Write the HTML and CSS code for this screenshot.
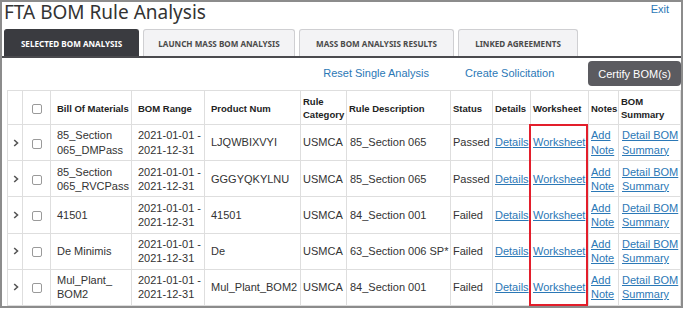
FILE: index.html
```html
<!DOCTYPE html>
<html>
<head>
    <title>FTA BOM Rule Analysis</title>
    <link rel="stylesheet" href="styles.css">
</head>
<body>
<div class="frame">
    <div class="page-header">
        <h1>FTA BOM Rule Analysis</h1>
        <a href="#" class="exit">Exit</a>
    </div>

    <div class="tabs">
        <div class="tab tab-selected active">SELECTED BOM ANALYSIS</div>
        <div class="tab tab-launch">LAUNCH MASS BOM ANALYSIS</div>
        <div class="tab tab-results">MASS BOM ANALYSIS RESULTS</div>
        <div class="tab tab-linked">LINKED AGREEMENTS</div>
    </div>

    <div class="toolbar">
        <a href="#" class="tool-link">Reset Single Analysis</a>
        <a href="#" class="tool-link">Create Solicitation</a>
        <button class="certify">Certify BOM(s)</button>
    </div>

    <div class="table-wrap">
        <table class="bom-table">
            <colgroup>
                <col style="width:15px">
                <col style="width:28px">
                <col style="width:81px">
                <col style="width:73px">
                <col style="width:96px">
                <col style="width:46px">
                <col style="width:104px">
                <col style="width:42px">
                <col style="width:38px">
                <col style="width:58px">
                <col style="width:30px">
                <col style="width:62px">
            </colgroup>
            <thead>
                <tr>
                    <th></th>
                    <th class="check-cell"><span class="checkbox"></span></th>
                    <th class="wide">Bill Of Materials</th>
                    <th class="wide">BOM Range</th>
                    <th class="wide">Product Num</th>
                    <th>Rule Category</th>
                    <th>Rule Description</th>
                    <th>Status</th>
                    <th>Details</th>
                    <th>Worksheet</th>
                    <th>Notes</th>
                    <th>BOM Summary</th>
                </tr>
            </thead>
            <tbody>
                <tr>
                    <td class="expand"><svg width="6" height="8" viewBox="0 0 6 8"><polyline points="1.2,1 4.5,4 1.2,7" fill="none" stroke="#555" stroke-width="1.6"/></svg></td>
                    <td class="check-cell"><span class="checkbox"></span></td>
                    <td class="wide">85_Section 065_DMPass</td>
                    <td class="wide">2021-01-01 - 2021-12-31</td>
                    <td class="wide">LJQWBIXVYI</td>
                    <td>USMCA</td>
                    <td class="desc">85_Section 065</td>
                    <td>Passed</td>
                    <td><a href="#">Details</a></td>
                    <td><a href="#">Worksheet</a></td>
                    <td><a href="#">Add Note</a></td>
                    <td class="summary"><a href="#">Detail BOM Summary</a></td>
                </tr>
                <tr>
                    <td class="expand"><svg width="6" height="8" viewBox="0 0 6 8"><polyline points="1.2,1 4.5,4 1.2,7" fill="none" stroke="#555" stroke-width="1.6"/></svg></td>
                    <td class="check-cell"><span class="checkbox"></span></td>
                    <td class="wide">85_Section 065_RVCPass</td>
                    <td class="wide">2021-01-01 - 2021-12-31</td>
                    <td class="wide">GGGYQKYLNU</td>
                    <td>USMCA</td>
                    <td class="desc">85_Section 065</td>
                    <td>Passed</td>
                    <td><a href="#">Details</a></td>
                    <td><a href="#">Worksheet</a></td>
                    <td><a href="#">Add Note</a></td>
                    <td class="summary"><a href="#">Detail BOM Summary</a></td>
                </tr>
                <tr>
                    <td class="expand"><svg width="6" height="8" viewBox="0 0 6 8"><polyline points="1.2,1 4.5,4 1.2,7" fill="none" stroke="#555" stroke-width="1.6"/></svg></td>
                    <td class="check-cell"><span class="checkbox"></span></td>
                    <td class="wide">41501</td>
                    <td class="wide">2021-01-01 - 2021-12-31</td>
                    <td class="wide">41501</td>
                    <td>USMCA</td>
                    <td class="desc">84_Section 001</td>
                    <td>Failed</td>
                    <td><a href="#">Details</a></td>
                    <td><a href="#">Worksheet</a></td>
                    <td><a href="#">Add Note</a></td>
                    <td class="summary"><a href="#">Detail BOM Summary</a></td>
                </tr>
                <tr>
                    <td class="expand"><svg width="6" height="8" viewBox="0 0 6 8"><polyline points="1.2,1 4.5,4 1.2,7" fill="none" stroke="#555" stroke-width="1.6"/></svg></td>
                    <td class="check-cell"><span class="checkbox"></span></td>
                    <td class="wide">De Minimis</td>
                    <td class="wide">2021-01-01 - 2021-12-31</td>
                    <td class="wide">De</td>
                    <td>USMCA</td>
                    <td class="desc">63_Section 006 SP*</td>
                    <td>Failed</td>
                    <td><a href="#">Details</a></td>
                    <td><a href="#">Worksheet</a></td>
                    <td><a href="#">Add Note</a></td>
                    <td class="summary"><a href="#">Detail BOM Summary</a></td>
                </tr>
                <tr>
                    <td class="expand"><svg width="6" height="8" viewBox="0 0 6 8"><polyline points="1.2,1 4.5,4 1.2,7" fill="none" stroke="#555" stroke-width="1.6"/></svg></td>
                    <td class="check-cell"><span class="checkbox"></span></td>
                    <td class="wide">Mul_Plant_<wbr>BOM2</td>
                    <td class="wide">2021-01-01 - 2021-12-31</td>
                    <td class="wide">Mul_Plant_BOM2</td>
                    <td>USMCA</td>
                    <td class="desc">84_Section 001</td>
                    <td>Failed</td>
                    <td><a href="#">Details</a></td>
                    <td><a href="#">Worksheet</a></td>
                    <td><a href="#">Add Note</a></td>
                    <td class="summary"><a href="#">Detail BOM Summary</a></td>
                </tr>
            </tbody>
        </table>
        <div class="highlight"></div>
    </div>
</div>
</body>
</html>
```

FILE: styles.css
```css
:root {
    --link-color: #2b78b6;
    --border-color: #dedede;
    --text-color: #333333;
    --tab-dark: #3a3b40;
}

* {
    box-sizing: border-box;
    margin: 0;
    padding: 0;
}

body {
    font-family: 'Liberation Sans', Arial, sans-serif;
    color: var(--text-color);
    background-color: #ffffff;
}

.frame {
    width: 683px;
    height: 308px;
    border: 2px solid #8c8c8c;
    overflow: hidden;
}

.page-header {
    height: 27px;
    display: flex;
    justify-content: space-between;
    align-items: flex-start;
    padding-left: 2px;
    padding-right: 12px;
}

h1 {
    font-family: 'Noto Sans', sans-serif;
    font-size: 19px;
    font-weight: 400;
    line-height: 20px;
    color: #333;
}

.exit {
    font-size: 11px;
    line-height: 12px;
    margin-top: 1px;
    color: var(--link-color);
    text-decoration: none;
}

.tabs {
    display: flex;
    gap: 4px;
    padding-left: 2px;
    border-bottom: 2px solid #4a4a4e;
}

.tab {
    height: 27px;
    display: flex;
    align-items: center;
    justify-content: center;
    font-family: 'Noto Sans', sans-serif;
    font-size: 8.1px;
    font-weight: 700;
    color: #4a4a4a;
    background-color: #f3f3f5;
    border: 1px solid #cfcfd2;
    border-bottom: none;
    border-radius: 3px 3px 0 0;
    white-space: nowrap;
}

.tab-selected { width: 135px; }
.tab-launch { width: 152px; }
.tab-results { width: 155px; }
.tab-linked { width: 120px; }

.tab.active {
    background-color: var(--tab-dark);
    border-color: var(--tab-dark);
    color: #ffffff;
}

.toolbar {
    height: 32px;
    display: flex;
    justify-content: flex-end;
    align-items: flex-start;
    padding-top: 3px;
}

.tool-link {
    font-size: 11px;
    line-height: 25px;
    color: var(--link-color);
    text-decoration: none;
    margin-right: 36px;
}

.tool-link + .tool-link {
    margin-right: 34px;
}

.certify {
    height: 25px;
    padding: 0 10px;
    font-family: 'Liberation Sans', Arial, sans-serif;
    font-size: 11px;
    color: #ffffff;
    background-color: #5b5b60;
    border: none;
    border-radius: 4px;
}

.table-wrap {
    position: relative;
    margin-left: 5px;
}

.bom-table {
    width: 673px;
    table-layout: fixed;
    border-collapse: collapse;
    border: 1px solid var(--border-color);
}

.bom-table th, .bom-table td {
    border: 1px solid var(--border-color);
    text-align: left;
    vertical-align: middle;
    padding: 3.4px 1px 3.4px 2px;
    overflow: hidden;
}

.bom-table th {
    font-size: 9.5px;
    font-weight: 700;
    line-height: 13px;
    padding-top: 4px;
    padding-bottom: 3px;
    color: #222;
}

.bom-table td {
    font-size: 11px;
    line-height: 14.2px;
}

.bom-table .wide {
    padding-left: 6px;
}

.bom-table .desc {
    white-space: nowrap;
    padding-left: 3px;
}

.bom-table .summary {
    padding-left: 3px;
}

.bom-table a {
    color: var(--link-color);
}

.expand {
    text-align: center !important;
}

.expand svg {
    display: block;
    margin-left: 3px;
}

.check-cell {
    text-align: center !important;
}

.checkbox {
    display: inline-block;
    width: 10px;
    height: 10px;
    border: 1px solid #9a9a9a;
    border-radius: 2px;
    vertical-align: middle;
    background-color: #fff;
}

.highlight {
    position: absolute;
    left: 522px;
    top: 34px;
    width: 59px;
    height: 182px;
    border: 2px solid #e31e2b;
    pointer-events: none;
}
```
